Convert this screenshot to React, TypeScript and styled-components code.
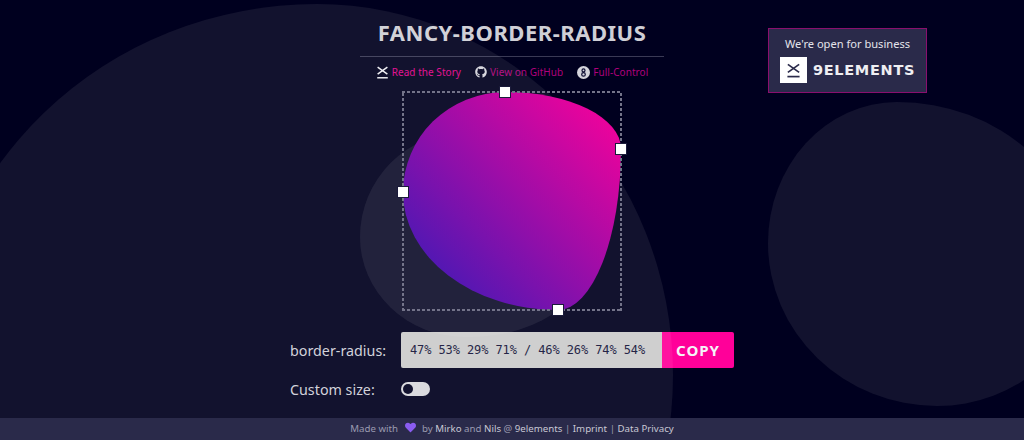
import { createGlobalStyle } from "styled-components";
import styled from "styled-components";
import { FaGithub, FaHeart } from "react-icons/fa";

const GlobalStyle = createGlobalStyle`
  html, body {
    margin: 0;
    padding: 0;
    background: #00001f;
  }
`;

const SANS = `"Noto Sans", "Open Sans", sans-serif`;
const DASH = "#74748a";

const LogoMark = ({ size, color }: { size: number; color: string }) => (
  <svg width={size} height={size} viewBox="0 0 16 16" fill="none" stroke={color} strokeWidth="1.8">
    <path d="M2 1.5 L14 10" />
    <path d="M14 1.5 L2 10" />
    <path d="M1.5 14.5 H14.5" />
  </svg>
);

const EightBall = () => (
  <svg width="13" height="13" viewBox="0 0 13 13">
    <circle cx="6.5" cy="6.5" r="6.5" fill="#d4d4dc" />
    <circle cx="6.5" cy="4.4" r="1.5" fill="none" stroke="#0a0a30" strokeWidth="1.2" />
    <circle cx="6.5" cy="8.4" r="1.8" fill="none" stroke="#0a0a30" strokeWidth="1.2" />
  </svg>
);

const App = () => {
  const radius = "47% 53% 29% 71% / 46% 26% 74% 54%";

  return (
    <Page>
      <GlobalStyle />

      <Main>
        <Title>FANCY-BORDER-RADIUS</Title>
        <Nav>
          <NavLink>
            <LogoMark size={13} color="#f0f0f4" />
            <NavText $tone="#e0008c">Read the Story</NavText>
          </NavLink>
          <NavLink>
            <FaGithub size={12} color="#d4d4dc" />
            <NavText $tone="#b0007c">View on GitHub</NavText>
          </NavLink>
          <NavLink>
            <EightBall />
            <NavText $tone="#b0007c">Full-Control</NavText>
          </NavLink>
        </Nav>

        <Stage>
          <Shape style={{ borderRadius: radius }} />
          <Handle $side="top" $pos={47} />
          <Handle $side="right" $pos={26} />
          <Handle $side="bottom" $pos={71} />
          <Handle $side="left" $pos={46} />
        </Stage>

        <OutputRow>
          <Label>border-radius:</Label>
          <Output>{radius}</Output>
          <CopyButton>COPY</CopyButton>
        </OutputRow>

        <SizeRow>
          <Label>Custom size:</Label>
          <Toggle>
            <Knob />
          </Toggle>
        </SizeRow>
      </Main>

      {/* translucent background shapes, they sit over the copy row too */}
      <BigBlob />
      <SmallBlob />
      <RightBlob />

      <Badge>
        <BadgeText>We're open for business</BadgeText>
        <BadgeBrand>
          <BrandTile>
            <LogoMark size={15} color="#2a2a4a" />
          </BrandTile>
          <BrandName>9ELEMENTS</BrandName>
        </BadgeBrand>
      </Badge>

      <Footer>
        Made with <Heart><FaHeart size={11} color="#8a5cf0" /></Heart> by <FootLink>Mirko</FootLink> and{" "}
        <FootLink>Nils</FootLink> @ <FootLink>9elements</FootLink> | <FootLink>Imprint</FootLink> |{" "}
        <FootLink>Data Privacy</FootLink>
      </Footer>
    </Page>
  );
};

const Page = styled.div`
  position: relative;
  width: 1024px;
  height: 440px;
  overflow: hidden;
  background: #00001f;
  font-family: ${SANS};
  display: flex;
  flex-direction: column;
`;

const Blob = styled.div`
  position: absolute;
  background: rgba(255, 255, 255, 0.07);
  pointer-events: none;
`;

const BigBlob = styled(Blob)`
  left: -69px;
  top: 4px;
  width: 742px;
  height: 742px;
  border-radius: 386px 356px 356px 386px / 371px;
`;

const SmallBlob = styled(Blob)`
  left: 360px;
  top: 132px;
  width: 240px;
  height: 205px;
  border-radius: 105px 135px 130px 105px / 105px 105px 100px 100px;
`;

const RightBlob = styled(Blob)`
  left: 768px;
  top: 102px;
  width: 316px;
  height: 304px;
  border-radius: 129px 187px 147px 169px / 141px 169px 134px 163px;
`;

const Main = styled.main`
  flex: 1;
  display: flex;
  flex-direction: column;
  align-items: center;
`;

const Title = styled.h1`
  width: 304px;
  margin: 0;
  padding: 16px 0 0;
  box-sizing: border-box;
  height: 57px;
  border-bottom: 1px solid #3a3a55;
  text-align: center;
  font-size: 22px;
  line-height: 33px;
  font-weight: 700;
  letter-spacing: 0.5px;
  color: #cfcfd6;
`;

const Nav = styled.nav`
  display: flex;
  align-items: center;
  justify-content: center;
  gap: 14px;
  height: 30px;
  margin-bottom: 5px;
`;

const NavLink = styled.a`
  display: flex;
  align-items: center;
  gap: 3px;
`;

const NavText = styled.span<{ $tone: string }>`
  font-size: 10px;
  letter-spacing: 0.05px;
  color: ${(p) => p.$tone};
`;

const Stage = styled.div`
  position: relative;
  z-index: 2;
  width: 218px;
  height: 218px;
  margin-bottom: 22px;

  /* fine dashes, a css dashed border at this width comes out too long */
  &::after {
    content: "";
    position: absolute;
    inset: -1px;
    pointer-events: none;
    background:
      repeating-linear-gradient(90deg, ${DASH} 0 3px, transparent 3px 5px) top / 100% 2px no-repeat,
      repeating-linear-gradient(90deg, ${DASH} 0 3px, transparent 3px 5px) bottom / 100% 2px no-repeat,
      repeating-linear-gradient(0deg, ${DASH} 0 3px, transparent 3px 5px) left / 2px 100% no-repeat,
      repeating-linear-gradient(0deg, ${DASH} 0 3px, transparent 3px 5px) right / 2px 100% no-repeat;
  }
`;

const Shape = styled.div`
  width: 100%;
  height: 100%;
  background: linear-gradient(45deg, #2f1cb8, #ff0099);
`;

const Handle = styled.span<{ $side: "top" | "right" | "bottom" | "left"; $pos: number }>`
  position: absolute;
  z-index: 1;
  width: 12px;
  height: 12px;
  box-sizing: border-box;
  background: #fff;
  border: 1.5px solid #1a1a3a;
  ${(p) => (p.$side === "top" || p.$side === "bottom" ? `left: ${p.$pos}%;` : `top: ${p.$pos}%;`)}
  ${(p) => `${p.$side}: -6px;`}
  transform: ${(p) => (p.$side === "top" || p.$side === "bottom" ? "translateX(-50%)" : "translateY(-50%)")};
`;

const OutputRow = styled.div`
  display: grid;
  grid-template-columns: 111px 261px 72px;
  align-items: center;
  width: 444px;
  height: 36px;
`;

const Label = styled.label`
  font-size: 14.3px;
  color: #cfcfd8;
`;

const Output = styled.div`
  height: 36px;
  line-height: 36px;
  padding-left: 9px;
  background: #cccccc;
  border-radius: 2px 0 0 2px;
  font-family: "DejaVu Sans Mono", monospace;
  font-size: 12px;
  letter-spacing: -0.1px;
  white-space: nowrap;
  color: #14143a;
`;

const CopyButton = styled.button`
  height: 36px;
  padding: 0;
  border: 0;
  border-radius: 0 2px 2px 0;
  background: #ff0099;
  color: #f4f4f8;
  font-family: ${SANS};
  font-size: 15px;
  font-weight: 700;
  letter-spacing: 1px;
`;

const SizeRow = styled.div`
  display: grid;
  grid-template-columns: 111px auto;
  align-items: center;
  justify-items: start;
  width: 444px;
  height: 22px;
  margin-top: 10px;
`;

const Toggle = styled.div`
  display: flex;
  align-items: center;
  width: 29px;
  height: 14px;
  padding: 0 2px;
  box-sizing: border-box;
  border-radius: 7px;
  background: #d8d8dc;
`;

const Knob = styled.span`
  width: 10px;
  height: 10px;
  border-radius: 50%;
  background: #00001f;
`;

const Badge = styled.aside`
  position: absolute;
  z-index: 2;
  left: 768px;
  top: 28px;
  width: 159px;
  height: 65px;
  box-sizing: border-box;
  border: 1px solid #8a0f6e;
  background: #2a2a4a;
  display: flex;
  flex-direction: column;
  align-items: center;
  padding-top: 7px;
`;

const BadgeText = styled.div`
  font-size: 11.1px;
  line-height: 15px;
  color: #e4e4ea;
`;

const BadgeBrand = styled.div`
  display: flex;
  align-items: center;
  gap: 6px;
  margin-top: 6px;
`;

const BrandTile = styled.div`
  display: flex;
  align-items: center;
  justify-content: center;
  width: 27px;
  height: 26px;
  background: #fff;
`;

const BrandName = styled.div`
  font-family: "DejaVu Sans", sans-serif;
  font-size: 14.5px;
  font-weight: 700;
  letter-spacing: 0.7px;
  color: #eeeef2;
`;

const Footer = styled.footer`
  position: relative;
  z-index: 2;
  height: 22px;
  line-height: 22px;
  background: #2a2a4a;
  text-align: center;
  font-size: 9.7px;
  color: #9a9ab0;
`;

const Heart = styled.span`
  display: inline-block;
  margin: 0 4px;
  vertical-align: -1px;
`;

const FootLink = styled.a`
  color: #c8c8d4;
`;

export default App;
